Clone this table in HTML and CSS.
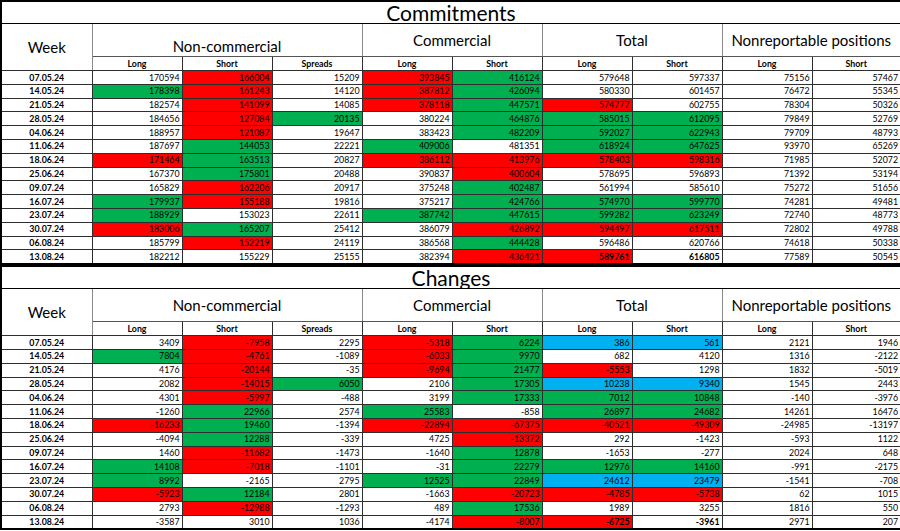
FILE: index.html
```html
<!DOCTYPE html>
<html>
<head>
<meta charset="utf-8">
<link rel="stylesheet" href="styles.css">
</head>
<body>
<div class="sheet">
<table class="cot top">
<colgroup><col class="cw"><col><col><col><col><col><col><col><col><col class="cl"></colgroup>
<tr class="title"><td colspan="10">Commitments</td></tr>
<tr class="head"><td rowspan="2" class="week">Week</td><td colspan="3" class="nc low">Non-commercial</td><td colspan="2">Commercial</td><td colspan="2">Total</td><td colspan="2">Nonreportable positions</td></tr>
<tr class="sub"><td>Long</td><td>Short</td><td>Spreads</td><td>Long</td><td>Short</td><td>Long</td><td>Short</td><td>Long</td><td>Short</td></tr>
<tr><th>07.05.24</th><td>170594</td><td class="r">166004</td><td>15209</td><td class="r">393845</td><td class="g">416124</td><td>579648</td><td>597337</td><td>75156</td><td>57467</td></tr>
<tr><th>14.05.24</th><td class="g">178398</td><td class="r">161243</td><td>14120</td><td class="r">387812</td><td class="g">426094</td><td>580330</td><td>601457</td><td>76472</td><td>55345</td></tr>
<tr><th>21.05.24</th><td>182574</td><td class="r">141099</td><td>14085</td><td class="r">378118</td><td class="g">447571</td><td class="r">574777</td><td>602755</td><td>78304</td><td>50326</td></tr>
<tr><th>28.05.24</th><td>184656</td><td class="r">127084</td><td class="g">20135</td><td>380224</td><td class="g">464876</td><td class="g">585015</td><td class="g">612095</td><td>79849</td><td>52769</td></tr>
<tr><th>04.06.24</th><td>188957</td><td class="r">121087</td><td>19647</td><td>383423</td><td class="g">482209</td><td class="g">592027</td><td class="g">622943</td><td>79709</td><td>48793</td></tr>
<tr><th>11.06.24</th><td>187697</td><td class="g">144053</td><td>22221</td><td class="g">409006</td><td>481351</td><td class="g">618924</td><td class="g">647625</td><td>93970</td><td>65269</td></tr>
<tr><th>18.06.24</th><td class="r">171464</td><td class="g">163513</td><td>20827</td><td class="r">386112</td><td class="r">413976</td><td class="r">578403</td><td class="r">598316</td><td>71985</td><td>52072</td></tr>
<tr><th>25.06.24</th><td>167370</td><td class="g">175801</td><td>20488</td><td>390837</td><td class="r">400604</td><td>578695</td><td>596893</td><td>71392</td><td>53194</td></tr>
<tr><th>09.07.24</th><td>165829</td><td class="r">162206</td><td>20917</td><td>375248</td><td class="g">402487</td><td>561994</td><td>585610</td><td>75272</td><td>51656</td></tr>
<tr><th>16.07.24</th><td class="g">179937</td><td class="r">155188</td><td>19816</td><td>375217</td><td class="g">424766</td><td class="g">574970</td><td class="g">599770</td><td>74281</td><td>49481</td></tr>
<tr><th>23.07.24</th><td class="g">188929</td><td>153023</td><td>22611</td><td class="g">387742</td><td class="g">447615</td><td class="g">599282</td><td class="g">623249</td><td>72740</td><td>48773</td></tr>
<tr><th>30.07.24</th><td class="r">183006</td><td class="g">165207</td><td>25412</td><td>386079</td><td class="r">426892</td><td class="r">594497</td><td class="r">617511</td><td>72802</td><td>49788</td></tr>
<tr><th>06.08.24</th><td>185799</td><td class="r">152219</td><td>24119</td><td>386568</td><td class="g">444428</td><td>596486</td><td>620766</td><td>74618</td><td>50338</td></tr>
<tr><th>13.08.24</th><td>182212</td><td>155229</td><td>25155</td><td>382394</td><td class="r">436421</td><td class="r bd">589761</td><td class="bd">616805</td><td>77589</td><td>50545</td></tr>
</table>
<table class="cot bottom">
<colgroup><col class="cw"><col><col><col><col><col><col><col><col><col class="cl"></colgroup>
<tr class="title"><td colspan="10">Changes</td></tr>
<tr class="head"><td rowspan="2" class="week">Week</td><td colspan="3" class="nc">Non-commercial</td><td colspan="2">Commercial</td><td colspan="2">Total</td><td colspan="2">Nonreportable positions</td></tr>
<tr class="sub"><td>Long</td><td>Short</td><td>Spreads</td><td>Long</td><td>Short</td><td>Long</td><td>Short</td><td>Long</td><td>Short</td></tr>
<tr><th>07.05.24</th><td>3409</td><td class="r">-7958</td><td>2295</td><td class="r">-5318</td><td class="g">6224</td><td class="b">386</td><td class="b">561</td><td>2121</td><td>1946</td></tr>
<tr><th>14.05.24</th><td class="g">7804</td><td class="r">-4761</td><td>-1089</td><td class="r">-6033</td><td class="g">9970</td><td>682</td><td>4120</td><td>1316</td><td>-2122</td></tr>
<tr><th>21.05.24</th><td>4176</td><td class="r">-20144</td><td>-35</td><td class="r">-9694</td><td class="g">21477</td><td class="r">-5553</td><td>1298</td><td>1832</td><td>-5019</td></tr>
<tr><th>28.05.24</th><td>2082</td><td class="r">-14015</td><td class="g">6050</td><td>2106</td><td class="g">17305</td><td class="b">10238</td><td class="b">9340</td><td>1545</td><td>2443</td></tr>
<tr><th>04.06.24</th><td>4301</td><td class="r">-5997</td><td>-488</td><td>3199</td><td class="g">17333</td><td class="g">7012</td><td class="g">10848</td><td>-140</td><td>-3976</td></tr>
<tr><th>11.06.24</th><td>-1260</td><td class="g">22966</td><td>2574</td><td class="g">25583</td><td>-858</td><td class="g">26897</td><td class="g">24682</td><td>14261</td><td>16476</td></tr>
<tr><th>18.06.24</th><td class="r">-16233</td><td class="g">19460</td><td>-1394</td><td class="r">-22894</td><td class="r">-67375</td><td class="r">-40521</td><td class="r">-49309</td><td>-24985</td><td>-13197</td></tr>
<tr><th>25.06.24</th><td>-4094</td><td class="g">12288</td><td>-339</td><td>4725</td><td class="r">-13372</td><td>292</td><td>-1423</td><td>-593</td><td>1122</td></tr>
<tr><th>09.07.24</th><td>1460</td><td class="r">-11682</td><td>-1473</td><td>-1640</td><td class="g">12878</td><td>-1653</td><td>-277</td><td>2024</td><td>648</td></tr>
<tr><th>16.07.24</th><td class="g">14108</td><td class="r">-7018</td><td>-1101</td><td>-31</td><td class="g">22279</td><td class="g">12976</td><td class="g">14160</td><td>-991</td><td>-2175</td></tr>
<tr><th>23.07.24</th><td class="g">8992</td><td>-2165</td><td>2795</td><td class="g">12525</td><td class="g">22849</td><td class="b">24612</td><td class="b">23479</td><td>-1541</td><td>-708</td></tr>
<tr><th>30.07.24</th><td class="r">-5923</td><td class="g">12184</td><td>2801</td><td>-1663</td><td class="r">-20723</td><td class="r">-4785</td><td class="r">-5738</td><td>62</td><td>1015</td></tr>
<tr><th>06.08.24</th><td>2793</td><td class="r">-12988</td><td>-1293</td><td>489</td><td class="g">17536</td><td>1989</td><td>3255</td><td>1816</td><td>550</td></tr>
<tr><th>13.08.24</th><td>-3587</td><td>3010</td><td>1036</td><td>-4174</td><td class="r">-8007</td><td class="r bd">-6725</td><td class="bd">-3961</td><td>2971</td><td>207</td></tr>
</table>
</div>
</body>
</html>
```
FILE: styles.css
```css
html, body {
  margin: 0;
  padding: 0;
  background: #fff;
}
.sheet {
  width: 900px;
  height: 531px;
  overflow: hidden;
  display: flex;
  flex-direction: column;
  font-family: Lato, "Liberation Sans", sans-serif;
  color: #000;
}
.cot {
  width: 900px;
  flex: none;
  table-layout: fixed;
  border-collapse: collapse;
  border: 2px solid #000;
}
.cot col { width: 90px; }
.cot col.cw { width: 91px; }
.cot col.cl { width: 89px; }
.cot td, .cot th {
  padding: 0;
  border: 1px solid #2e2e2e;
  line-height: 1;
  overflow: hidden;
  white-space: nowrap;
}
.title td {
  height: 21px;
  font-size: 21px;
  text-align: center;
  vertical-align: middle;
  border-bottom: 1px solid #000;
}
.head td {
  height: 32px;
  font-size: 15px;
  text-align: center;
  vertical-align: middle;
  border-left-color: #8a8a8a;
  border-right-color: #8a8a8a;
  border-bottom-color: #555;
}
.head td.low {
  vertical-align: bottom;
  padding-bottom: 2px;
  height: 30px;
}
.head td.week {
  border-bottom-color: #2e2e2e;
}
.sub td {
  height: 12px;
  font-size: 8.8px;
  font-weight: 700;
  text-align: center;
  vertical-align: bottom;
  padding-bottom: 1px;
}
.cot th {
  height: 11.8px;
  font-size: 8.8px;
  font-weight: 700;
  text-align: center;
  vertical-align: middle;
  padding-top: 1px;
}
.cot tr:not(.title):not(.head):not(.sub) td {
  height: 11.8px;
  font-size: 8.8px;
  text-align: right;
  vertical-align: middle;
  padding: 1px 2px 0 0;
}
.cot td.r { background: #ff0000; }
.cot td.g { background: #00b050; }
.cot td.b { background: #00b0f0; }
.cot td.bd { font-weight: 700; }
```
